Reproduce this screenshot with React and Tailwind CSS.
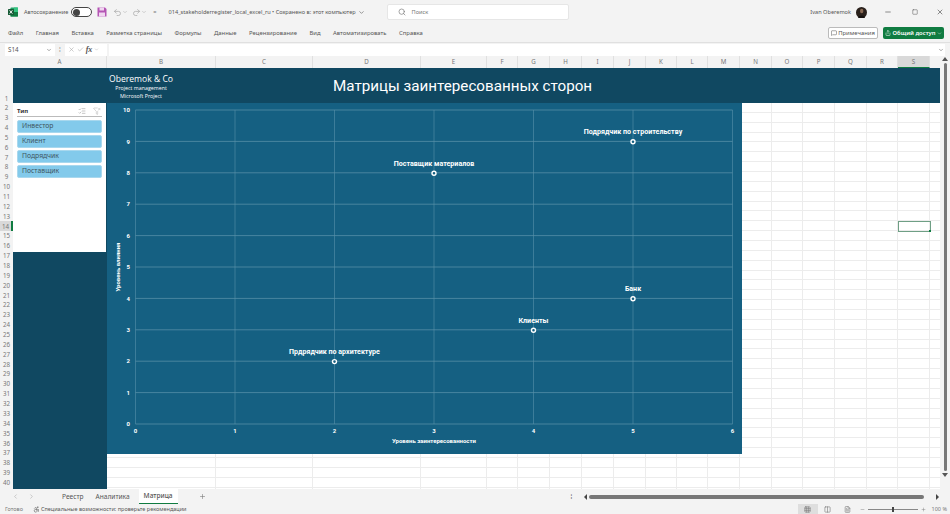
import React from "react";
import { ChevronDown, X, Check, Search, Minus, Plus, ChevronLeft, ChevronRight, Undo2, Redo2, MessageSquare, Share, ListChecks, FilterX, Square, Accessibility, Grid3x3, Columns2, FileText } from "lucide-react";

const tabs = ["Файл", "Главная", "Вставка", "Разметка страницы", "Формулы", "Данные", "Рецензирование", "Вид", "Автоматизировать", "Справка"];
const columns = [
  ["A", 94], ["B", 109], ["C", 97], ["D", 108], ["E", 66], ["F", 31], ["G", 32], ["H", 32], ["I", 32], ["J", 32],
  ["K", 31], ["L", 31], ["M", 32], ["N", 32], ["O", 31], ["P", 32], ["Q", 32], ["R", 31], ["S", 32],
];
const rows = Array.from({ length: 40 }, (_, i) => i + 1);
const slicerItems = ["Инвестор", "Клиент", "Подрядчик", "Поставщик"];
const points = [
  { x: 5, y: 9, label: "Подрядчик по строительству" },
  { x: 3, y: 8, label: "Поставщик материалов" },
  { x: 5, y: 4, label: "Банк" },
  { x: 4, y: 3, label: "Клиенты" },
  { x: 2, y: 2, label: "Прдрядчик по архитектуре" },
];

const ExcelLogo = () => (
  <svg width="10" height="10" viewBox="0 0 10 10" className="ml-[8px]">
    <rect x="2.5" y="0.5" width="7.5" height="9" rx="0.8" fill="#21a366" />
    <rect x="6" y="0.5" width="4" height="4.5" fill="#33c481" />
    <rect x="2.5" y="5" width="7.5" height="4.5" fill="#107c41" />
    <rect x="0" y="2" width="6" height="6" rx="0.6" fill="#185c37" />
    <path d="M1.6 3.3 L4.4 6.7 M4.4 3.3 L1.6 6.7" stroke="#fff" strokeWidth="0.9" />
  </svg>
);

const SaveIcon = () => (
  <svg width="10" height="10" viewBox="0 0 10 10" className="ml-[5px]">
    <path d="M0.5 0.5 H8 L9.5 2 V9.5 H0.5 Z" fill="#b455b4" />
    <rect x="2.5" y="0.5" width="4.5" height="3" fill="#f0d6f0" />
    <rect x="2" y="5.5" width="6" height="4" fill="#f0d6f0" />
  </svg>
);

const Avatar = () => (
  <svg width="11" height="11" viewBox="0 0 11 11" className="ml-[5px]">
    <circle cx="5.5" cy="5.5" r="5.5" fill="#2a211c" />
    <ellipse cx="5.7" cy="4" rx="1.7" ry="2.2" fill="#8a6a55" />
    <path d="M2 11 C2.5 7.5 8.5 7.5 9 11 Z" fill="#15110f" />
  </svg>
);

const Chart = () => {
  const px = (x) => 28.5 + x * 99.5;
  const py = (y) => 321 - y * 31.4;
  return (
    <svg width="635" height="351" className="block">
      {[0, 1, 2, 3, 4, 5, 6].map((x) => (
        <g key={x}>
          <line x1={px(x)} x2={px(x)} y1={py(10)} y2={py(0)} stroke="#4a87a2" strokeWidth="0.75" />
          <text x={px(x)} y="330" textAnchor="middle" fontSize="6" fontWeight="700" fill="#fff">{x}</text>
        </g>
      ))}
      {[0, 1, 2, 3, 4, 5, 6, 7, 8, 9, 10].map((y) => (
        <g key={y}>
          <line x1={px(0)} x2={px(6)} y1={py(y)} y2={py(y)} stroke="#5a92aa" strokeWidth="0.75" />
          <text x="23" y={py(y) + 2.2} textAnchor="end" fontSize="6" fontWeight="700" fill="#fff">{y}</text>
        </g>
      ))}
      {points.map((p) => (
        <g key={p.label}>
          <circle cx={px(p.x)} cy={py(p.y) + 0.4} r="2" fill="#156082" stroke="#fff" strokeWidth="1.4" />
          <text x={px(p.x)} y={py(p.y) - 7} textAnchor="middle" fontSize="7.1" fontWeight="700" fill="#fff">{p.label}</text>
        </g>
      ))}
      <text x="327" y="340" textAnchor="middle" fontSize="6" fontWeight="700" fill="#fff">Уровень заинтересованности</text>
      <text transform="translate(13 164) rotate(-90)" textAnchor="middle" fontSize="6" fontWeight="700" fill="#fff">Уровень влияния</text>
    </svg>
  );
};

const App = () => {
  return (
    <div className="w-[950px] h-[514px] overflow-hidden flex flex-col bg-[#f3f3f3] text-[#555] font-['Noto_Sans',sans-serif]">
      {/* Title bar */}
      <div className="h-[24px] flex items-center text-[5.6px] shrink-0">
        <ExcelLogo />
        <span className="ml-[6px]">Автосохранение</span>
        <div className="ml-[3px] w-[21px] h-[10px] rounded-full border border-[#444] bg-white flex items-center px-[1px]">
          <div className="w-[7px] h-[7px] rounded-full bg-[#444]" />
        </div>
        <SaveIcon />
        <Undo2 size={9} className="ml-[6px] text-[#aaa]" />
        <ChevronDown size={6} className="text-[#aaa]" />
        <Redo2 size={9} className="ml-[4px] text-[#aaa]" />
        <ChevronDown size={6} className="text-[#aaa]" />
        <span className="ml-[6px] text-[#777]">=</span>
        <span className="ml-[12px] whitespace-nowrap">014_stakeholderregister_local_excel_ru • Сохранено в: этот компьютер</span>
        <ChevronDown size={7} className="ml-[2px]" />
        <div className="ml-[22px] w-[182px] h-[16px] bg-white rounded-[2px] border border-[#e6e6e6] flex items-center px-[10px] gap-[6px] text-[#777]">
          <Search size={8} />
          Поиск
        </div>
        <div className="ml-auto flex items-center">
          <span>Ivan Oberemok</span>
          <Avatar />
          <Minus size={8} className="ml-[17px]" />
          <Square size={6} className="ml-[20px]" />
          <X size={8} className="ml-[18px] mr-[6px]" />
        </div>
      </div>

      {/* Ribbon tabs */}
      <div className="h-[18px] flex items-center text-[5.9px] shrink-0 pl-[8px] pr-[6px]">
        <div className="flex gap-[12.5px]">
          {tabs.map((t) => (
            <span key={t} className="whitespace-nowrap">{t}</span>
          ))}
        </div>
        <div className="ml-auto flex items-center gap-[5px]">
          <div className="w-[50px] h-[12px] border border-[#bbb] rounded-[2px] bg-white flex items-center justify-center gap-[1px]">
            <MessageSquare size={6} />
            Примечания
          </div>
          <div className="w-[61px] h-[12px] rounded-[2px] bg-[#107c41] text-white font-semibold flex items-center justify-center gap-[1px]">
            <Share size={6} />
            Общий доступ
            <ChevronDown size={5} />
          </div>
        </div>
      </div>

      {/* Formula bar */}
      <div className="h-[14px] border-t border-[#e0e0e0] flex items-center text-[6.2px] shrink-0">
        <div className="ml-[5px] w-[50px] h-[12px] bg-white flex items-center justify-between px-[3px]">
          S14
          <ChevronDown size={6} />
        </div>
        <span className="mx-[4px] text-[#999]">⁞</span>
        <div className="w-[42px] h-[12px] bg-white flex items-center px-[3px] gap-[2px] text-[#aaa]">
          <X size={7} />
          <Check size={7} />
          <span className="font-['Liberation_Serif',serif] italic font-bold text-[8px] text-[#555]">fx</span>
          <ChevronDown size={5} />
        </div>
        <div className="ml-[2px] mr-[5px] flex-1 h-[12px] bg-white flex items-center justify-end pr-[1px]">
          <ChevronDown size={6} />
        </div>
      </div>

      {/* Sheet */}
      <div className="flex-1 min-h-0 flex relative">
        <div className="w-[940px] shrink-0 flex flex-col">
          <div className="h-[12px] flex text-[6.2px] text-[#777] shrink-0">
            <div className="w-[13px] shrink-0" />
            {columns.map(([name, width]) => (
              <div
                key={name}
                style={{ width }}
                className={`flex items-center justify-center border-r border-[#e0e0e0] ${name === "S" ? "bg-[#d9d9d9] border-b border-b-[#107c41]" : ""}`}
              >
                {name}
              </div>
            ))}
          </div>
          <div className="flex-1 flex min-h-0">
            <div className="w-[13px] shrink-0 text-[6.2px] text-[#777]">
              {rows.map((r) => (
                <div
                  key={r}
                  className={`flex justify-center ${r === 1 ? "h-[35px] items-end" : "h-[9.86px] items-center"} ${r === 14 ? "bg-[#d9d9d9] border-r-2 border-[#107c41]" : ""}`}
                >
                  {r}
                </div>
              ))}
            </div>
            <div className="relative flex-1 bg-white overflow-hidden">
              {/* empty cell grid */}
              <div className="absolute inset-0 flex">
                {columns.map(([name, width]) => (
                  <div key={name} style={{ width }} className="border-r border-[#ececec] shrink-0" />
                ))}
              </div>
              <div className="absolute inset-0">
                {rows.map((r) => (
                  <div key={r} className={`border-b border-[#ececec] ${r === 1 ? "h-[35px]" : "h-[9.86px]"}`} />
                ))}
              </div>

              {/* dashboard on top of the cells */}
              <div className="absolute left-0 top-0 w-[927px] h-[35px] bg-[#104861] flex text-white">
                <div className="w-[95px] shrink-0" />
                <div className="w-[66px] shrink-0 flex flex-col items-center text-[5.3px] leading-[8px] font-['Open_Sans',sans-serif]">
                  <span className="text-[8.6px] leading-[10px] mt-[6px] whitespace-nowrap">Oberemok & Co</span>
                  <span className="whitespace-nowrap">Project management</span>
                  <span className="whitespace-nowrap">Microsoft Project</span>
                </div>
                <div className="ml-[159px] mt-[6px] text-[15.2px] leading-[24px] whitespace-nowrap font-['Roboto',sans-serif]">Матрицы заинтересованных сторон</div>
              </div>
              <div className="absolute left-0 top-[35px] bottom-0 w-[94px] bg-[#104861]" />
              <div className="absolute left-0 top-[35px] w-[93px] h-[149px] bg-white px-[4px] pt-[3px]">
                <div className="h-[11px] flex items-center border-b border-[#bbb] text-[6px] font-bold text-[#333]">
                  Тип
                  <ListChecks size={8} strokeWidth={1} className="ml-auto text-[#555]" />
                  <FilterX size={8} strokeWidth={1} className="ml-[7px] mr-[1px] text-[#888]" />
                </div>
                <div className="mt-[3px] flex flex-col gap-[2px]">
                  {slicerItems.map((s) => (
                    <div key={s} className="h-[13px] rounded-[2px] bg-[#83caeb] border border-[#a9d8ee] text-[#3f5560] text-[6.8px] flex items-center pl-[4px]">{s}</div>
                  ))}
                </div>
              </div>
              <div className="absolute left-[94px] top-[35px] bg-[#156082] font-['Roboto',sans-serif]">
                <Chart />
              </div>
              {/* active cell S14 */}
              <div className="absolute left-[885px] top-[153px] w-[33px] h-[11px] border border-[#6f9f85]">
                <div className="absolute -right-[1px] -bottom-[1px] w-[2px] h-[2px] bg-[#107c41]" />
              </div>
            </div>
          </div>
        </div>
        {/* vertical scrollbar */}
        <div className="flex-1 flex flex-col items-center pt-[1px] text-[#555]">
          <div className="w-0 h-0 border-x-[3px] border-x-transparent border-b-[4px] border-b-[#555]" />
          <div className="mt-[2px] w-[3px] h-[408px] rounded-full bg-[#777]" />
          <div className="mt-[2px] w-0 h-0 border-x-[3px] border-x-transparent border-t-[4px] border-t-[#555]" />
        </div>
      </div>

      {/* Sheet tabs */}
      <div className="h-[15px] flex items-center text-[6.6px] shrink-0">
        <ChevronLeft size={7} className="ml-[12px] text-[#aaa]" />
        <ChevronRight size={7} className="ml-[9px] text-[#aaa]" />
        <span className="ml-[27px]">Реестр</span>
        <span className="ml-[12px]">Аналитика</span>
        <span className="ml-[9px] px-[5px] h-full bg-white font-medium border-b border-[#107c41] flex items-center">Матрица</span>
        <Plus size={7} className="ml-[21px] text-[#777]" />
        <span className="ml-[365px] text-[#777]">⁞</span>
        <div className="ml-[12px] w-0 h-0 border-y-[3px] border-y-transparent border-r-[3px] border-r-[#444]" />
        <div className="ml-[2px] w-[335px] h-[4px] rounded-full bg-[#777]" />
        <div className="ml-[12px] w-0 h-0 border-y-[3px] border-y-transparent border-l-[3px] border-l-[#444]" />
      </div>

      {/* Status bar */}
      <div className="h-[10px] flex items-center text-[5.5px] shrink-0">
        <span className="ml-[5px] text-[#777]">Готово</span>
        <Accessibility size={7} className="ml-[10px]" />
        <span className="ml-[1px]">Специальные возможности: проверьте рекомендации</span>
        <div className="ml-auto flex items-center h-full text-[#777]">
          <div className="w-[20px] h-full bg-[#dedede] flex items-center justify-center"><Grid3x3 size={7} /></div>
          <Columns2 size={7} className="ml-[6px]" />
          <FileText size={7} className="ml-[13px]" />
          <Minus size={5} className="ml-[9px]" />
          <div className="ml-[3px] w-[50px] h-px bg-[#888] relative">
            <div className="absolute left-[24px] -top-[2px] w-[2px] h-[5px] bg-[#444]" />
          </div>
          <Plus size={5} className="ml-[3px]" />
          <span className="ml-[6px] mr-[3px]">100 %</span>
        </div>
      </div>
    </div>
  );
};

export default App;
